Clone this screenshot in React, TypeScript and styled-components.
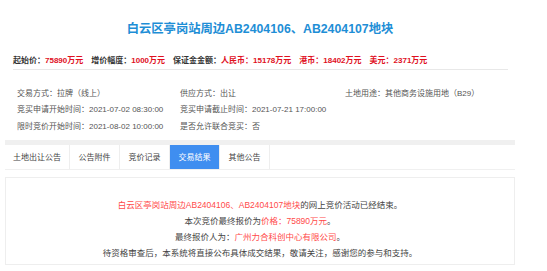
import React from 'react';
import styled, { createGlobalStyle } from 'styled-components';

const GlobalStyle = createGlobalStyle`
  body {
    margin: 0;
    background: #ffffff;
    font-family: "Liberation Sans", "Noto Sans CJK SC", sans-serif;
  }
`;

const Page = styled.div`
  width: 510px;
  margin-left: 5px;
  display: flex;
  flex-direction: column;
`;

const Title = styled.h1`
  margin: 0;
  padding-top: 20px;
  height: 18px;
  line-height: 18px;
  font-size: 12.3px;
  font-weight: bold;
  color: #1e8ed6;
  text-align: center;
`;

const PriceBar = styled.div`
  margin: 17px 7px 0 8px;
  display: flex;
  gap: 8px;
  font-size: 8px;
  line-height: 12px;
  font-weight: bold;
  padding-bottom: 2px;
  border-bottom: 1px solid #e8e8e8;
`;

const PriceItem = styled.span`
  color: #333333;
  white-space: nowrap;
`;

const Red = styled.span`
  color: #e0101e;
`;

const InfoGrid = styled.div`
  margin-top: 14px;
  padding-left: 12px;
  display: grid;
  grid-template-columns: 163px 165px 1fr;
  grid-auto-rows: 16.5px;
  align-items: center;
  font-size: 8px;
  color: #555555;
`;

const InfoCell = styled.div`
  white-space: nowrap;
`;

const TabBar = styled.div`
  margin-top: 6px;
  border-top: 5px solid #f0f0f0;
  border-bottom: 1px solid #f0f0f0;
  display: flex;
  height: 24px;
`;

const Tab = styled.div<{ active?: boolean }>`
  min-width: 50px;
  padding: 0 8px;
  box-sizing: border-box;
  display: flex;
  align-items: center;
  justify-content: center;
  font-size: 8px;
  color: ${p => (p.active ? '#ffffff' : '#444444')};
  background: ${p => (p.active ? '#3f8ef0' : '#ffffff')};
  border-right: 1px solid #eeeeee;
`;

const ResultBox = styled.div`
  margin-top: 7px;
  height: 67px;
  border: 1px solid #eeeeee;
  padding-top: 19px;
  box-sizing: content-box;
  display: flex;
  flex-direction: column;
  align-items: center;
  font-size: 8.5px;
  color: #444444;
`;

const ResultLine = styled.p`
  margin: 0;
  height: 16.3px;
  line-height: 16.3px;
  white-space: nowrap;
`;

const Hot = styled.span`
  color: #ff4a4a;
`;

const tabs = ['土地出让公告', '公告附件', '竞价记录', '交易结果', '其他公告'];

const info = [
  '交易方式：拉牌（线上）',
  '供应方式：出让',
  '土地用途：其他商务设施用地（B29）',
  '竞买申请开始时间：2021-07-02 08:30:00',
  '竞买申请截止时间：2021-07-21 17:00:00',
  '',
  '限时竞价开始时间：2021-08-02 10:00:00',
  '是否允许联合竞买：否',
  '',
];

export default function App() {
  return (
    <>
      <GlobalStyle />
      <Page>
        <Title>白云区亭岗站周边AB2404106、AB2404107地块</Title>
        <PriceBar>
          <PriceItem>起始价：<Red>75890万元</Red></PriceItem>
          <PriceItem>增价幅度：<Red>1000万元</Red></PriceItem>
          <PriceItem>保证金金额：<Red>人民币：15178万元</Red></PriceItem>
          <PriceItem><Red>港币：18402万元</Red></PriceItem>
          <PriceItem><Red>美元：2371万元</Red></PriceItem>
        </PriceBar>
        <InfoGrid>
          {info.map((t, i) => (
            <InfoCell key={i}>{t}</InfoCell>
          ))}
        </InfoGrid>
        <TabBar>
          {tabs.map(t => (
            <Tab key={t} active={t === '交易结果'}>{t}</Tab>
          ))}
        </TabBar>
        <ResultBox>
          <ResultLine>
            <Hot>白云区亭岗站周边AB2404106、AB2404107地块</Hot>的网上竞价活动已经结束。
          </ResultLine>
          <ResultLine>
            本次竞价最终报价为<Hot>价格：75890万元</Hot>。
          </ResultLine>
          <ResultLine>
            最终报价人为：<Hot>广州力合科创中心有限公司</Hot>。
          </ResultLine>
          <ResultLine>
            待资格审查后，本系统将直接公布具体成交结果，敬请关注，感谢您的参与和支持。
          </ResultLine>
        </ResultBox>
      </Page>
    </>
  );
}
